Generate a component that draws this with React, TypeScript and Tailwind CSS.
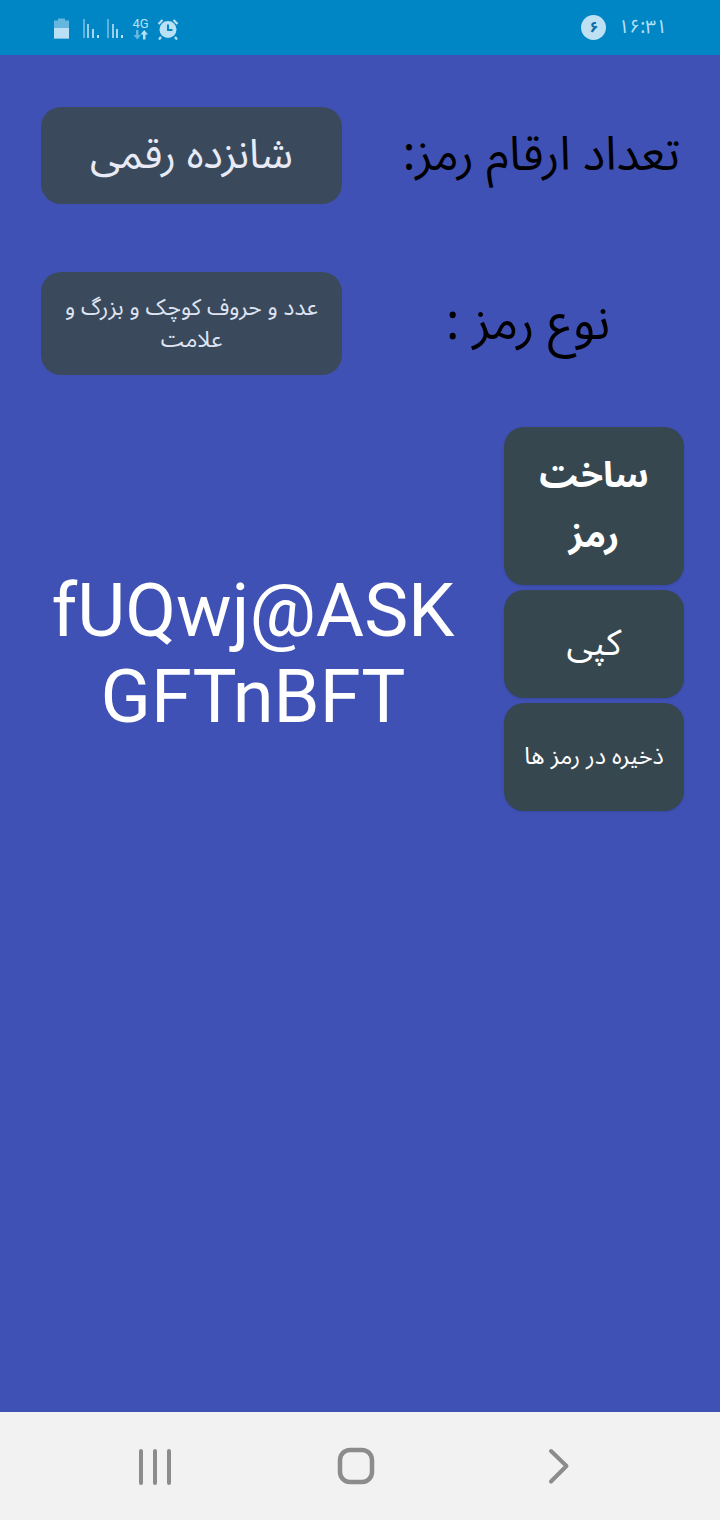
const arabic = "font-['Noto_Sans_Arabic','Noto_Naskh_Arabic','DejaVu_Sans',sans-serif]";

function StatusBar() {
  return (
    <div className="flex h-[55px] items-center justify-between bg-[#0086c5] pl-[53px] pr-[53px] text-[#b9e0f5]">
      <svg width="130" height="26" viewBox="0 0 130 26" fill="currentColor" className="block">
        <path d="M1 5.500h4V3.500h7v2h4v18H1z" opacity="0.55" />
        <path d="M1 13h15v10.500H1z" />
        <g>
          <rect x="30" y="4" width="2" height="19" opacity="0.5" />
          <rect x="34" y="9" width="2" height="14" opacity="0.8" />
          <rect x="39" y="14" width="2" height="9" opacity="0.9" />
          <rect x="44" y="20" width="2" height="3" />
          <rect x="54" y="4" width="2" height="19" opacity="0.5" />
          <rect x="59" y="9" width="2" height="14" opacity="0.8" />
          <rect x="63" y="14" width="2" height="9" opacity="0.9" />
          <rect x="68" y="20" width="2" height="3" />
        </g>
        <text x="79.500" y="12.500" fontSize="13" fontWeight="400" fontFamily="Roboto, sans-serif">4G</text>
        <path d="M83 15h2.500v5H88l-3.750 4.500L80.500 20H83z" opacity="0.55" />
        <path d="M90 24.500v-5h-2.500l3.750-4.500 3.750 4.500H92.500v5z" />
        <circle cx="115" cy="14.500" r="8.500" />
        <path d="M115 9.500v5.500h4.500" fill="none" stroke="#0086c5" strokeWidth="2" />
        <path d="M105.500 9l4-4M124.500 9l-4-4M108 22l-2 2.500M122 22l2 2.500" fill="none" stroke="currentColor" strokeWidth="2.200" />
      </svg>
      <div className="flex items-center gap-[12px]">
        <div className={`flex h-[25px] w-[25px] items-center justify-center rounded-full bg-[#bde0f3] text-[15px] font-bold leading-none text-[#0a6ea6] ${arabic}`}>۶</div>
        <span className={`text-[19px] leading-none ${arabic}`}>۱۶:۳۱</span>
      </div>
    </div>
  );
}

function NavBar() {
  return (
    <div className="flex h-[108px] items-center bg-[#f2f2f2]">
      <svg width="720" height="108" viewBox="0 0 720 108" fill="none" stroke="#8c8c8c" strokeLinecap="round" className="block">
        <path d="M141 39v32M155 39v32M169 39v32" strokeWidth="4" />
        <rect x="340" y="38" width="32" height="32" rx="10" strokeWidth="4.500" />
        <path d="M551 39l15.500 15-15.500 15.500" strokeWidth="4" strokeLinejoin="round" />
      </svg>
    </div>
  );
}

export default function App() {
  return (
    <div className="flex h-[1520px] w-[720px] flex-col bg-[#3f51b5]">
      <StatusBar />
      <main dir="ltr" className={`flex flex-1 flex-col px-[36px] pt-[52px] ${arabic}`}>
        <div className="flex items-center">
          <div dir="rtl" className="ml-[5px] flex h-[97px] w-[301px] items-center justify-center rounded-[20px] bg-[#3a4a5c] text-[41px] text-[#e8eaf6]">شانزده رقمی</div>
          <div dir="rtl" className="ml-[58px] w-[280px] whitespace-nowrap text-[47px] text-black">تعداد ارقام رمز:</div>
        </div>
        <div className="mt-[68px] flex items-center">
          <div dir="rtl" className="ml-[5px] flex h-[103px] w-[301px] items-center justify-center rounded-[20px] bg-[#3a4a5c] px-[20px] text-center text-[22.700px] leading-[32px] text-[#dfe3f2]">عدد و حروف کوچک و بزرگ و علامت</div>
          <div dir="rtl" className="ml-[46px] w-[280px] text-center text-[50px] text-black">نوع رمز :</div>
        </div>
        <div className="mt-[52px] flex items-center">
          <div className="mt-[70px] w-[434px] text-center font-['Roboto',sans-serif] text-[74px] leading-[86px] text-white">
            <div>fUQwj@ASK</div>
            <div>GFTnBFT</div>
          </div>
          <div dir="rtl" className="ml-[34px] flex w-[180px] flex-col gap-[5px]">
            <button className="h-[158px] rounded-[20px] bg-[#37474f] px-[20px] text-[36px] font-bold leading-[60px] text-white shadow-sm">ساخت رمز</button>
            <button className="h-[108px] rounded-[20px] bg-[#37474f] text-[36px] text-white shadow-sm">کپی</button>
            <button className="h-[108px] rounded-[20px] bg-[#37474f] text-[23.500px] text-white shadow-sm">ذخیره در رمز ها</button>
          </div>
        </div>
      </main>
      <NavBar />
    </div>
  );
}
